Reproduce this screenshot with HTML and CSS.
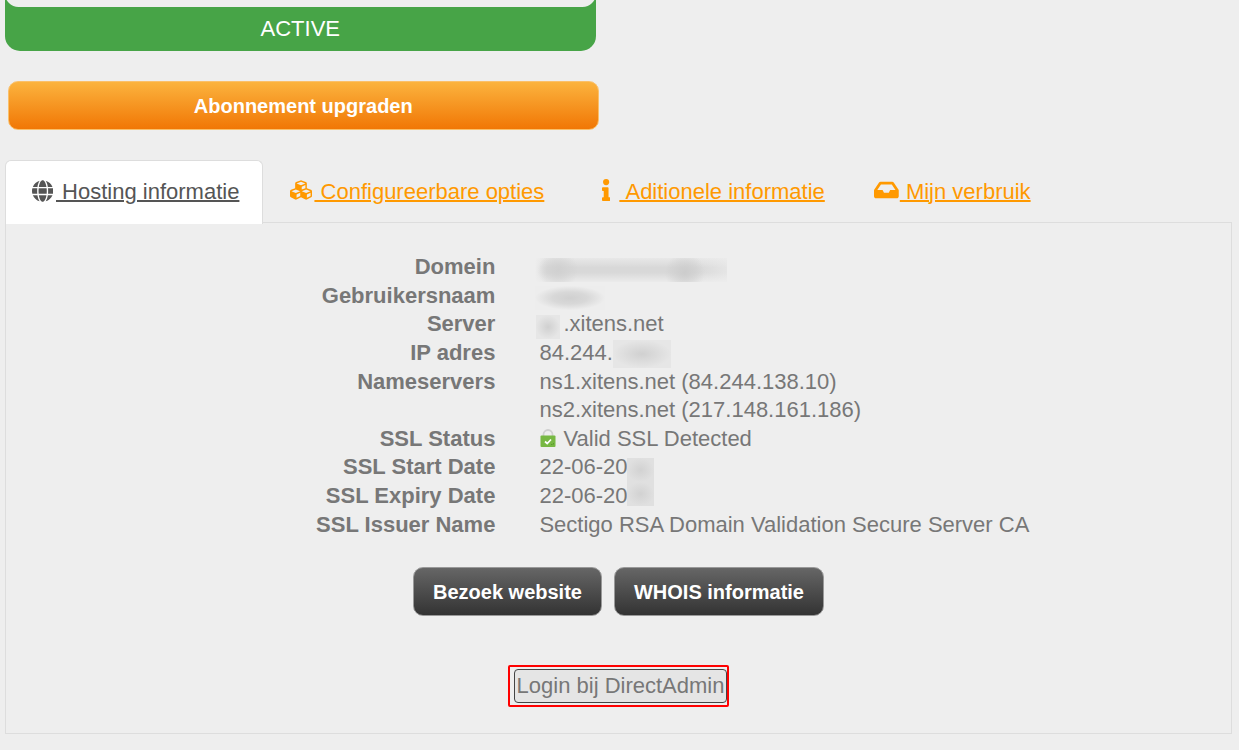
FILE: index.html
```html
<!DOCTYPE html>
<html lang="nl">
<head>
<meta charset="utf-8">
<meta name="viewport" content="width=device-width, initial-scale=1">
<title>Hosting informatie</title>
<link rel="stylesheet" href="styles.css">
</head>
<body>
<main class="page">
  <section class="product">
    <div class="product-status">
      <div class="product-card"></div>
      <div class="status-label">ACTIVE</div>
    </div>
    <button type="button" class="btn btn-upgrade">Abonnement upgraden</button>
  </section>

  <nav class="tabs">
    <a class="tab tab-active" href="#hosting"><span class="tab-icon"><svg class="icon" viewBox="0 0 496 512" aria-hidden="true"><path d="M336.500 160C322 70.700 287.800 8 248 8s-74 62.700-88.500 152h177zM152 256c0 22.200 1.200 43.500 3.300 64h185.300c2.100-20.500 3.300-41.800 3.300-64s-1.200-43.500-3.300-64H155.300c-2.100 20.500-3.300 41.800-3.300 64zm324.700-96c-28.600-67.900-86.500-120.400-158-141.600 24.400 33.800 41.200 84.700 50 141.600h108zM177.200 18.400C105.800 39.600 47.800 92.100 19.300 160h108c8.700-56.900 25.500-107.800 49.900-141.600zM487.400 192H372.700c2.100 21 3.300 42.500 3.300 64s-1.200 43-3.300 64h114.600c5.500-20.500 8.600-41.800 8.600-64s-3.100-43.500-8.500-64zM120 256c0-21.500 1.200-43 3.300-64H8.600C3.200 212.500 0 233.800 0 256s3.200 43.500 8.600 64h114.600c-2-21-3.200-42.500-3.200-64zm39.500 96c14.500 89.300 48.700 152 88.500 152s74-62.700 88.500-152h-177zm159.300 141.600c71.400-21.200 129.400-73.700 158-141.600h-108c-8.800 56.900-25.600 107.800-50 141.600zM19.300 352c28.600 67.900 86.500 120.400 158 141.600-24.400-33.800-41.200-84.700-50-141.600h-108z"/></svg></span><span class="tab-text">&nbsp;Hosting informatie</span></a>
    <a class="tab" href="#opties"><span class="tab-icon"><svg class="icon" viewBox="0 0 512 512" aria-hidden="true"><path d="M488.600 250.200L392 214V105.500c0-15-9.300-28.400-23.400-33.700l-100-37.500c-8.100-3.100-17.100-3.100-25.300 0l-100 37.500c-14.100 5.300-23.400 18.700-23.400 33.700V214l-96.600 36.200C9.300 255.500 0 268.900 0 283.900V394c0 13.600 7.700 26.100 19.900 32.200l100 50c10.100 5.100 22.100 5.100 32.200 0l103.900-52 103.900 52c10.100 5.100 22.100 5.100 32.200 0l100-50c12.200-6.100 19.900-18.600 19.900-32.200V283.900c0-15-9.300-28.400-23.400-33.700zM358 214.800l-85 31.900v-68.200l85-37v73.300zM154 104.100l102-38.200 102 38.200v.6l-102 41.400-102-41.400v-.6zm84 291.100l-85 42.500v-79.100l85-38.800v75.400zm0-112l-102 41.400-102-41.400v-.6l102-38.200 102 38.200v.6zm240 112l-85 42.500v-79.100l85-38.800v75.400zm0-112l-102 41.400-102-41.400v-.6l102-38.200 102 38.200v.6z"/></svg></span><span class="tab-text">&nbsp;Configureerbare opties</span></a>
    <a class="tab" href="#aditioneel"><span class="tab-icon"><svg class="icon" viewBox="0 0 192 512" aria-hidden="true"><path d="M20 424h20V280H20c-11 0-20-9-20-20v-48c0-11 9-20 20-20h112c11 0 20 9 20 20v212h20c11 0 20 9 20 20v48c0 11-9 20-20 20H20c-11 0-20-9-20-20v-48c0-11 9-20 20-20z"/><circle cx="96" cy="72" r="72"/></svg></span><span class="tab-text">&nbsp;Aditionele informatie</span></a>
    <a class="tab" href="#verbruik"><span class="tab-icon"><svg class="icon" viewBox="0 0 576 512" aria-hidden="true"><path d="M567.900 243.900L462.300 85.400A48 48 0 0 0 422.300 64H153.700a48 48 0 0 0-40 21.400L8 243.900A48 48 0 0 0 0 270.500V400c0 26.500 21.500 48 48 48h480c26.500 0 48-21.500 48-48V270.500a48 48 0 0 0-8-26.600zM162.300 128h251.400l85.300 128H376l-32 64H232l-32-64H77l85.300-128z"/></svg></span><span class="tab-text">&nbsp;Mijn verbruik</span></a>
  </nav>

  <section class="panel" id="hosting">
    <dl class="details">
      <dt>Domein</dt>
      <dd><span class="masked masked-domain"></span></dd>
      <dt>Gebruikersnaam</dt>
      <dd><span class="masked masked-user"></span></dd>
      <dt>Server</dt>
      <dd><span class="masked masked-server"></span>.xitens.net</dd>
      <dt>IP adres</dt>
      <dd>84.244.<span class="masked masked-ip"></span></dd>
      <dt>Nameservers</dt>
      <dd>ns1.xitens.net (84.244.138.10)<br>ns2.xitens.net (217.148.161.186)</dd>
      <dt>SSL Status</dt>
      <dd><svg class="lock" viewBox="0 0 18 20" aria-hidden="true"><path d="M4.500 9V6.500a4.500 4.500 0 0 1 9 0V9" fill="none" stroke="#cfcfcf" stroke-width="1.800"/><rect x="1.500" y="7.500" width="15" height="11.500" rx="1" fill="#77b843"/><path d="M6 13.500l2.200 2L12 11.500" fill="none" stroke="#fff" stroke-width="1.700"/><path d="M12 16.500h1.500M14.500 15v1.500" stroke="#5c9a2e"/></svg> Valid SSL Detected</dd>
      <dt>SSL Start Date</dt>
      <dd>22-06-20<span class="masked masked-year"></span></dd>
      <dt>SSL Expiry Date</dt>
      <dd>22-06-20<span class="masked masked-year masked-year-end"></span></dd>
      <dt>SSL Issuer Name</dt>
      <dd>Sectigo RSA Domain Validation Secure Server CA</dd>
    </dl>
    <div class="actions">
      <button type="button" class="btn btn-dark">Bezoek website</button>
      <button type="button" class="btn btn-dark">WHOIS informatie</button>
    </div>
    <div class="login-frame">
      <button type="button" class="btn-login">Login bij DirectAdmin</button>
    </div>
  </section>
</main>
</body>
</html>
```

FILE: styles.css
```css
* {
  box-sizing: border-box;
}

body {
  margin: 0;
  background: #eee;
  color: #777;
  font: 22px/1.3 "Liberation Sans", Arial, sans-serif;
}

.page {
  padding: 0 7px 16px 5px;
}

.product {
  display: flow-root;
  width: calc(50% - 23px);
}

.product-status {
  margin-top: -20px;
  border-radius: 15px;
  background: #47a447;
  color: #fff;
  text-align: center;
}

.product-card {
  height: 27px;
  border-radius: 15px;
  background: #eee;
}

.status-label {
  padding: 8px 0 7px;
}

.btn {
  padding: 12px 19px 10px;
  border: 1px solid #999;
  border-radius: 10px;
  color: #fff;
  font: bold 20px/25px "Liberation Sans", Arial, sans-serif;
  cursor: pointer;
}

.btn-upgrade {
  display: block;
  width: 100%;
  margin: 30px 0 30px 3px;
  border-color: #fac06a;
  background: linear-gradient(#fbb33e, #f17705);
}

.btn-dark {
  background: linear-gradient(#666, #333);
}

.tabs {
  display: flex;
}

.tab {
  display: flex;
  padding: 17px 23px 16px;
  border: 1px solid transparent;
  border-bottom: 0;
  border-radius: 6px 6px 0 0;
  color: #f90;
  text-decoration: none;
}

.tab-active {
  z-index: 1;
  margin-bottom: -2px;
  border-color: #ddd;
  background: #fff;
  color: #555;
}

.tab-icon {
  display: flex;
  justify-content: center;
  align-items: center;
  width: 27px;
  padding-bottom: 4px;
}

.tab-text {
  text-decoration: underline 2px;
}

.icon {
  height: 22px;
  fill: currentColor;
}

.panel {
  display: flex;
  flex-direction: column;
  align-items: center;
  padding: 30px 0 26px;
  border: 1px solid #ddd;
}

.details {
  display: grid;
  grid-template-columns: 5fr 7fr;
  width: 100%;
  margin: 0;
}

.details dt {
  padding-right: 21px;
  font-weight: bold;
  text-align: right;
}

.details dd {
  margin: 0;
  padding-left: 23px;
}

.lock {
  width: 18px;
  height: 20px;
  vertical-align: -2px;
}

.masked {
  display: inline-block;
  height: 24px;
  vertical-align: bottom;
  background: radial-gradient(closest-side, #d0d0d0, #e6e6e6);
}

.masked-domain {
  width: 192px;
  margin-left: -4px;
  background:
    radial-gradient(circle at 78% 60%, #ccc, transparent 20px),
    radial-gradient(circle at 12% 50%, #d0d0d0, transparent 20px),
    linear-gradient(90deg, #eee, transparent 12px, transparent 160px, #eeeeee99),
    linear-gradient(#e8e8e8, #d8d8d8 40%, #d8d8d8 60%, #ebebeb);
}

.masked-user {
  width: 70px;
  margin-left: -4px;
  background: radial-gradient(closest-side, #d0d0d0, #d8d8d8 50%, #ededed);
}

.masked-server {
  width: 24px;
  margin: 0 3px 0 -3px;
}

.masked-ip {
  width: 58px;
  height: 28px;
}

.masked-year {
  width: 27px;
  background: radial-gradient(closest-side, #d2d2d2, #e0e0e0);
}

.masked-year-end {
  vertical-align: top;
}

.actions {
  display: flex;
  gap: 12px;
  margin: 28px 0 49px;
}

.login-frame {
  padding: 2px 0 2px 4px;
  border: 2px solid #f00;
  border-radius: 2px;
}

.btn-login {
  display: block;
  padding: 2px;
  border: 1px solid #444;
  border-radius: 4px;
  background: #e5e5e5;
  color: #777;
  font: 22px/28px "Liberation Sans", Arial, sans-serif;
  cursor: pointer;
}
```
